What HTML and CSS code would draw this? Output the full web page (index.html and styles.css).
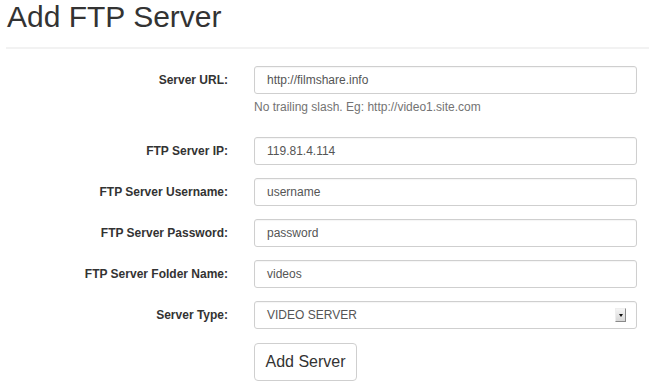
FILE: index.html
```html
<!DOCTYPE html>
<html>
<head>
<meta charset="utf-8">
<link rel="stylesheet" href="styles.css">
</head>
<body>
<div class="page-header">
  <h1>Add FTP Server</h1>
</div>
<form class="form">
  <div class="group">
    <label class="label">Server URL:</label>
    <div class="field">
      <div class="input">http://filmshare.info</div>
      <p class="help">No trailing slash. Eg: http://video1.site.com</p>
    </div>
  </div>
  <div class="group">
    <label class="label">FTP Server IP:</label>
    <div class="field"><div class="input">119.81.4.114</div></div>
  </div>
  <div class="group">
    <label class="label">FTP Server Username:</label>
    <div class="field"><div class="input">username</div></div>
  </div>
  <div class="group">
    <label class="label">FTP Server Password:</label>
    <div class="field"><div class="input">password</div></div>
  </div>
  <div class="group">
    <label class="label">FTP Server Folder Name:</label>
    <div class="field"><div class="input">videos</div></div>
  </div>
  <div class="group">
    <label class="label">Server Type:</label>
    <div class="field">
      <div class="input select"><span>VIDEO SERVER</span><span class="arrow"><span class="tri"></span></span></div>
    </div>
  </div>
  <div class="group">
    <span class="label"></span>
    <div class="field"><button type="button" class="btn">Add Server</button></div>
  </div>
</form>
</body>
</html>
```
FILE: styles.css
```css
html, body {
  margin: 0;
  padding: 0;
  background: #fff;
  font-family: "Liberation Sans", Arial, sans-serif;
  color: #333;
}
.page-header {
  margin: 0 1px 0 6px;
  border-bottom: 2px solid #f2f2f2;
  padding-bottom: 13px;
}
.page-header h1 {
  margin: 0;
  padding-left: 1px;
  font-size: 30px;
  font-weight: normal;
  line-height: 34px;
  color: #333;
}
.form {
  margin-top: 17px;
}
.group {
  display: grid;
  grid-template-columns: 228px 383px;
  column-gap: 26px;
  margin-bottom: 13px;
}
.label {
  font-size: 12px;
  font-weight: bold;
  text-align: right;
  line-height: 28px;
  height: 28px;
  color: #333;
}
.input {
  box-sizing: border-box;
  height: 28px;
  border: 1px solid #cfcfcf;
  border-radius: 3px;
  padding: 0 12px;
  font-size: 12px;
  line-height: 26px;
  color: #555;
  box-shadow: inset 0 1px 1px rgba(0,0,0,0.04);
}
.help {
  margin: 5px 0 8px;
  font-size: 12px;
  line-height: 17px;
  color: #737373;
}
.select {
  display: flex;
  align-items: center;
  padding-right: 10px;
}
.select .arrow {
  margin-left: auto;
  box-sizing: border-box;
  width: 11px;
  height: 14px;
  background: linear-gradient(#f4f4f4, #d8d8d8);
  border-top: 1px solid #eee;
  border-left: 1px solid #eee;
  border-right: 1px solid #8a8a8a;
  border-bottom: 1px solid #8a8a8a;
  display: flex;
  align-items: center;
  justify-content: center;
}
.select .tri {
  width: 0;
  height: 0;
  border-left: 2.5px solid transparent;
  border-right: 2.5px solid transparent;
  border-top: 3px solid #111;
}
.btn {
  box-sizing: border-box;
  height: 38px;
  width: 103px;
  padding: 0;
  margin-top: 1px;
  border: 1px solid #cfcfcf;
  border-radius: 4px;
  background: #fff;
  font-family: "Liberation Sans", Arial, sans-serif;
  font-size: 16px;
  color: #333;
}
```
